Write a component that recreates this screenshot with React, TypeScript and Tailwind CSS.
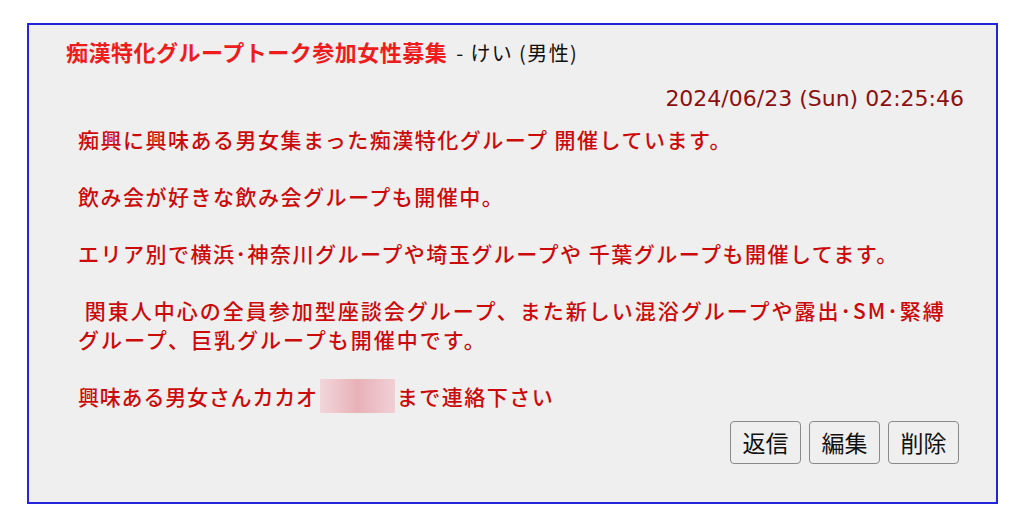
import React from 'react';

const jp = { fontFamily: '"Noto Sans CJK JP", "Noto Sans", sans-serif' };

export default function App() {
  const btn =
    'h-[43px] w-[71px] rounded-[4px] border border-[#8a8a8a] bg-[#efefef] text-[23px] text-[#111] leading-none';

  return (
    <div className="w-[1024px] h-[530px] bg-white pt-[23px] pl-[27px]" style={jp}>
      <div className="w-[971px] h-[481px] border-2 border-[#2424d8] bg-[#efefef] pl-[37px] pr-[32px] pt-[10px]">
        {/* title */}
        <div className="flex items-baseline h-[34px]">
          <span className="text-[22px] font-bold text-[#ee1c1c] tracking-[0.5px]">痴漢特化グループトーク参加女性募集</span>
          <span className="text-[20px] text-[#111] ml-[9px] tracking-[1.4px]">- けい (男性)</span>
        </div>

        {/* date */}
        <div className="flex justify-end mt-[12px] h-[34px] items-center">
          <span
            className="text-[22px] text-[#8c1010]"
            style={{ fontFamily: '"DejaVu Sans", "Noto Sans", sans-serif' }}
          >
            2024/06/23 (Sun) 02:25:46
          </span>
        </div>

        {/* body */}
        <div className="pl-[12px] text-[21px] leading-[28.5px] text-[#cc0a0a] font-medium mt-[10px] tracking-[1.5px]">
          <p>痴興に興味ある男女集まった痴漢特化グループ 開催しています。</p>
          <br />
          <p>飲み会が好きな飲み会グループも開催中。</p>
          <br />
          <p>エリア別で横浜･神奈川グループや埼玉グループや 千葉グループも開催してます。</p>
          <br />
          <p className="tracking-[2px]">
            &nbsp;関東人中心の全員参加型座談会グループ、また新しい混浴グループや露出･SM･緊縛
            <br />
            グループ、巨乳グループも開催中です。
          </p>
          <br />
          <p className="flex items-center h-[28.5px]">
            <span className="tracking-[0.8px]">興味ある男女さんカカオ</span>
            <span className="inline-block w-[75px] h-[34px] mx-[2px] bg-gradient-to-r from-[#f2d4d8] via-[#e8aab2] to-[#f0ccd2] opacity-90" />
            <span>まで連絡下さい</span>
          </p>
        </div>

        {/* buttons */}
        <div className="flex justify-end gap-[8px] mt-[11px] pr-[5px]">
          <button className={btn}>返信</button>
          <button className={btn}>編集</button>
          <button className={btn}>削除</button>
        </div>
      </div>
    </div>
  );
}
